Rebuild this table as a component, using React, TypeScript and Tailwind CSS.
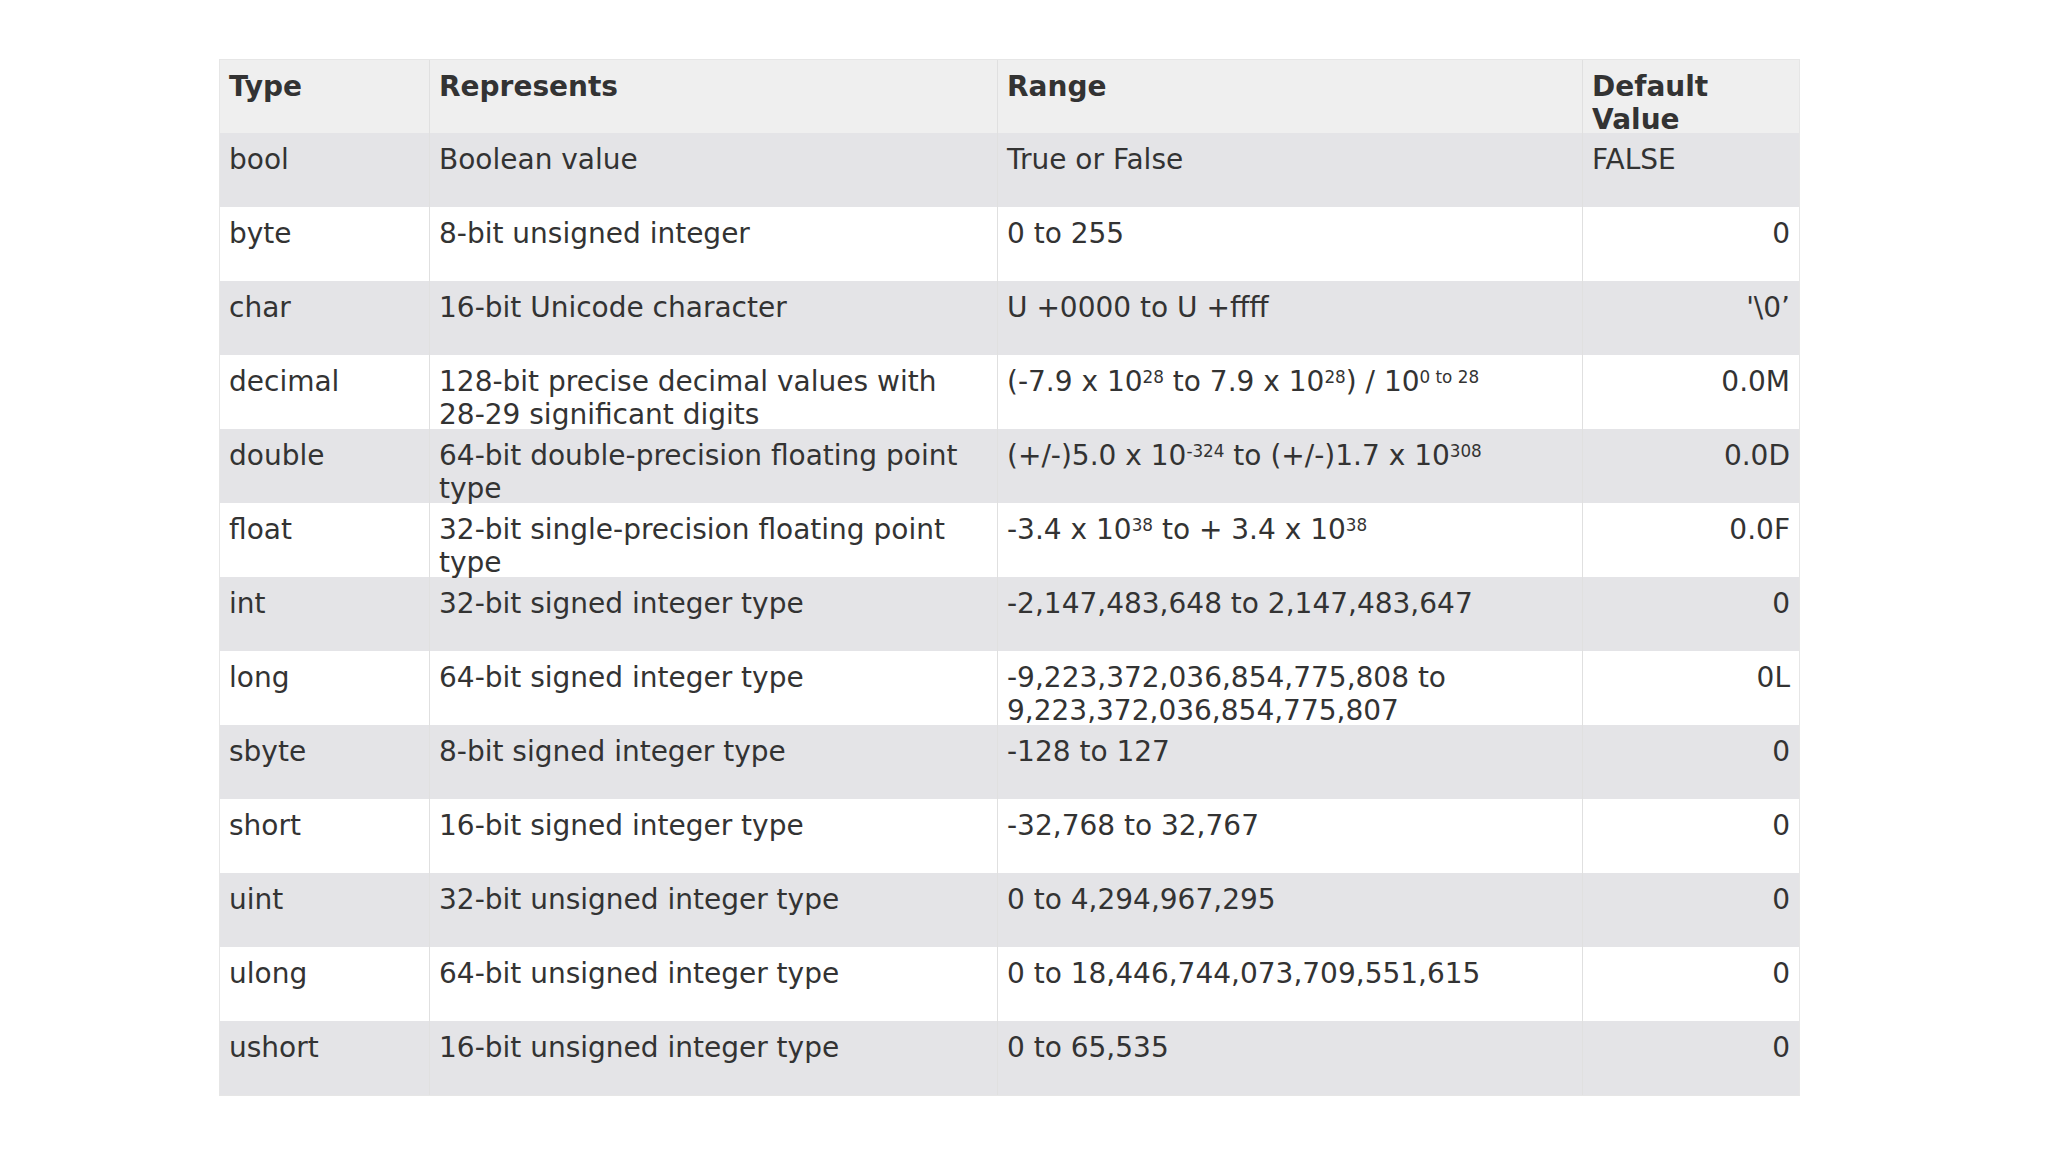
import React from "react";

// ── C# value types table ─────────────────────────────────────────────────────

type Row = {
  type: string;
  rep: string;
  range: React.ReactNode;
  def: string;
  left?: boolean;
};

const Sup = ({ children }: { children: React.ReactNode }) => (
  <span className="text-[0.6em] relative -top-[0.5em] align-baseline leading-none">{children}</span>
);

const rows: Row[] = [
  { type: "bool", rep: "Boolean value", range: "True or False", def: "FALSE", left: true },
  { type: "byte", rep: "8-bit unsigned integer", range: "0 to 255", def: "0" },
  { type: "char", rep: "16-bit Unicode character", range: "U +0000 to U +ffff", def: "'\\0’" },
  {
    type: "decimal",
    rep: "128-bit precise decimal values with 28-29 significant digits",
    range: (
      <>
        (-7.9 x 10<Sup>28</Sup> to 7.9 x 10<Sup>28</Sup>) / 10<Sup>0 to 28</Sup>
      </>
    ),
    def: "0.0M",
  },
  {
    type: "double",
    rep: "64-bit double-precision floating point type",
    range: (
      <>
        (+/-)5.0 x 10<Sup>-324</Sup> to (+/-)1.7 x 10<Sup>308</Sup>
      </>
    ),
    def: "0.0D",
  },
  {
    type: "float",
    rep: "32-bit single-precision floating point type",
    range: (
      <>
        -3.4 x 10<Sup>38</Sup> to + 3.4 x 10<Sup>38</Sup>
      </>
    ),
    def: "0.0F",
  },
  { type: "int", rep: "32-bit signed integer type", range: "-2,147,483,648 to 2,147,483,647", def: "0" },
  {
    type: "long",
    rep: "64-bit signed integer type",
    range: "-9,223,372,036,854,775,808 to 9,223,372,036,854,775,807",
    def: "0L",
  },
  { type: "sbyte", rep: "8-bit signed integer type", range: "-128 to 127", def: "0" },
  { type: "short", rep: "16-bit signed integer type", range: "-32,768 to 32,767", def: "0" },
  { type: "uint", rep: "32-bit unsigned integer type", range: "0 to 4,294,967,295", def: "0" },
  { type: "ulong", rep: "64-bit unsigned integer type", range: "0 to 18,446,744,073,709,551,615", def: "0" },
  { type: "ushort", rep: "16-bit unsigned integer type", range: "0 to 65,535", def: "0" },
];

const cols = "grid grid-cols-[209px_568px_585px_217px]";
const cell = "px-[9px] pt-[11px] border-l border-[#e0e0e0] first:border-l-0 leading-[1.165]";

export default function App() {
  return (
    <div
      className="w-[2048px] h-[1152px] bg-white pt-[59px] pl-[219px] text-[#333333] text-[28px]"
      style={{ fontFamily: '"DejaVu Sans", Verdana, sans-serif' }}
    >
      <div className="w-[1579px] border border-[#e6e6e6] box-content">
        {/* Header */}
        <div className={`${cols} h-[73px] bg-[#efefef] font-bold`}>
          <div className={cell}>Type</div>
          <div className={cell}>Represents</div>
          <div className={cell}>Range</div>
          <div className={cell}>Default Value</div>
        </div>

        {/* Body rows */}
        {rows.map((r, i) => (
          <div key={r.type} className={`${cols} h-[74px] ${i % 2 === 0 ? "bg-[#e4e4e7]" : "bg-white"}`}>
            <div className={cell}>{r.type}</div>
            <div className={cell}>{r.rep}</div>
            <div className={cell}>{r.range}</div>
            <div className={`${cell} ${r.left ? "text-left" : "text-right"}`}>{r.def}</div>
          </div>
        ))}
      </div>
    </div>
  );
}
